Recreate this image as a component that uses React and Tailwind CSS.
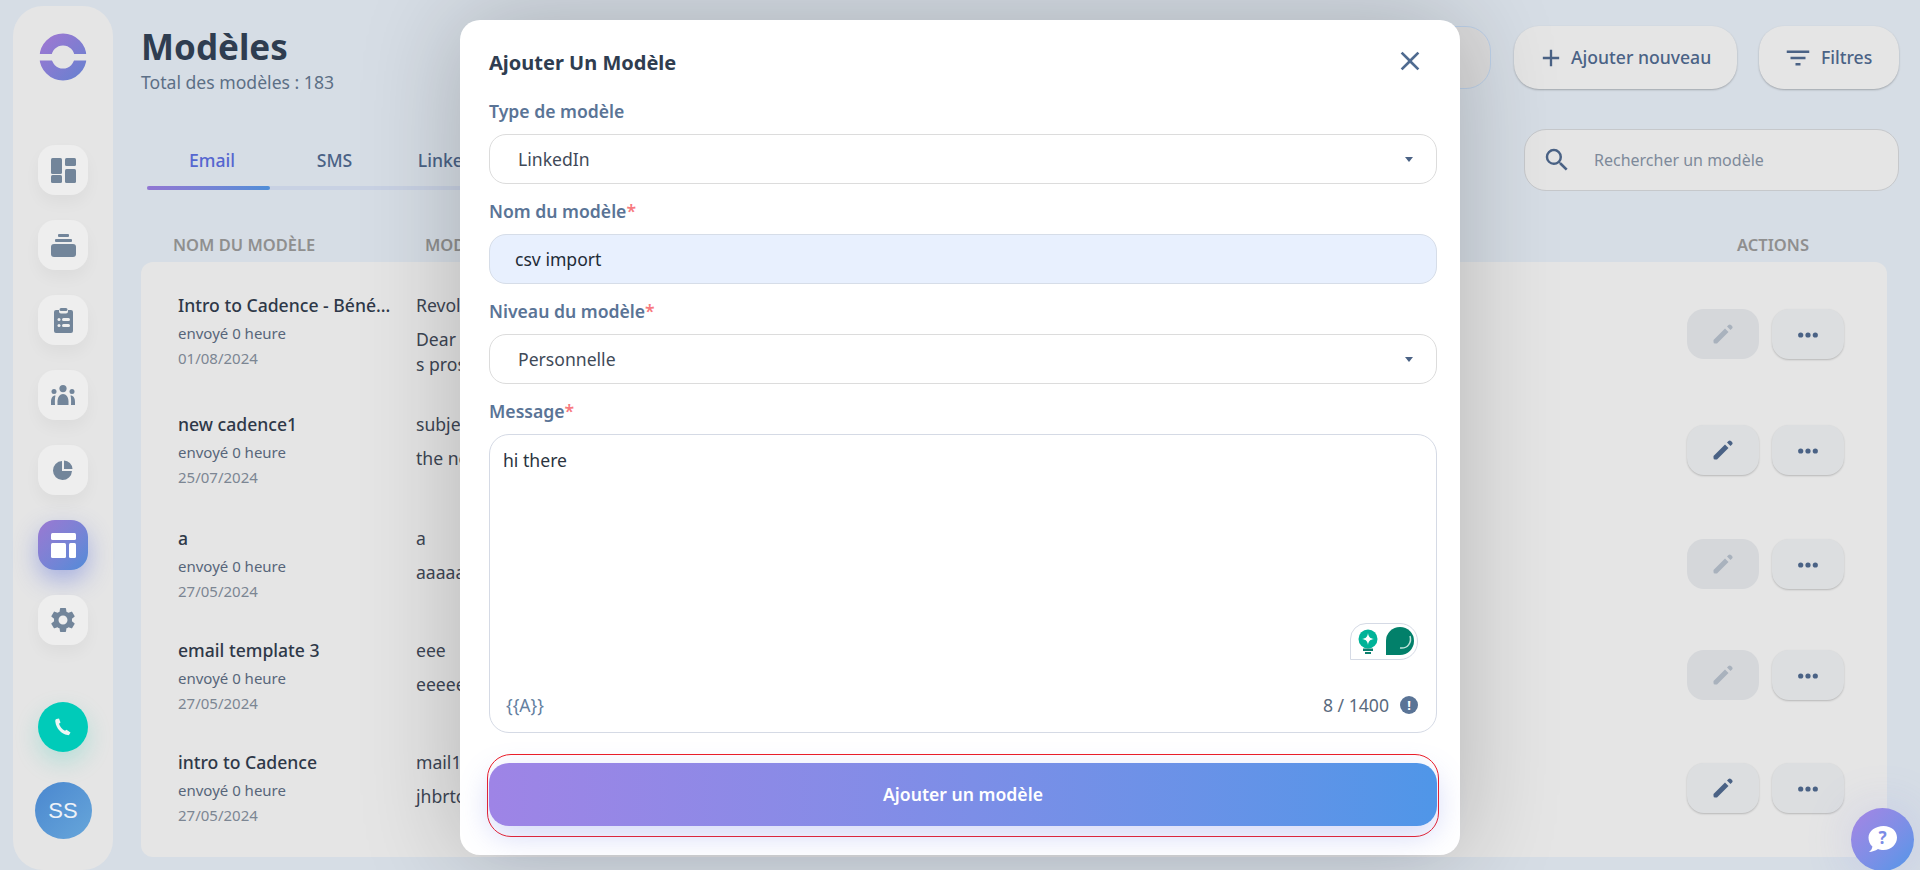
import React from "react";
import { MdSettings, MdSearch, MdAdd, MdFilterList, MdClose } from "react-icons/md";

const Dashboard = () => (
  <svg width="25" height="25" viewBox="0 0 25 25" fill="currentColor">
    <rect x="0" y="0" width="11" height="16" rx="1.500" />
    <rect x="0" y="17" width="11" height="8" rx="1.500" />
    <rect x="14" y="0" width="11" height="8" rx="1.500" />
    <rect x="14" y="11" width="11" height="14" rx="1.500" />
  </svg>
);
const Stack = () => (
  <svg width="25" height="23" viewBox="0 0 25 23" fill="currentColor">
    <rect x="7" y="0" width="11" height="3" rx="1" />
    <rect x="4" y="5" width="17" height="3" rx="1" />
    <path d="M3 10h19a3 3 0 0 1 3 3v7a3 3 0 0 1-3 3H3a3 3 0 0 1-3-3v-7a3 3 0 0 1 3-3z" />
  </svg>
);
const Clip = () => (
  <svg width="19" height="25" viewBox="0 0 19 25">
    <path fill="currentColor" d="M2 2h3v1.500a2 2 0 0 0 2 2h5a2 2 0 0 0 2-2V2h3a2 2 0 0 1 2 2v19a2 2 0 0 1-2 2H2a2 2 0 0 1-2-2V4a2 2 0 0 1 2-2zM7 0h5a1 1 0 0 1 0 3H7a1 1 0 0 1 0-3z" />
    <g fill="#efefef">
      <rect x="3.500" y="10" width="3" height="3" rx="1.500" />
      <rect x="8" y="10" width="8" height="3" rx="1.500" />
      <rect x="3.500" y="16" width="3" height="3" rx="1.500" />
      <rect x="8" y="16" width="8" height="3" rx="1.500" />
    </g>
  </svg>
);
const Team = () => (
  <svg width="24" height="20" viewBox="0 0 24 20" fill="currentColor">
    <circle cx="12" cy="3.600" r="3.600" />
    <circle cx="3" cy="6.500" r="2.500" />
    <circle cx="21" cy="6.500" r="2.500" />
    <path d="M6.500 20v-3.500C6.500 12 9 9 12 9s5.500 3 5.500 7.500V20z" />
    <path d="M0 20v-3C0 13 1.500 10.500 4.500 10.500 3.800 12.500 3.800 17 4 20z" />
    <path d="M24 20v-3c0-4-1.500-6.500-4.500-6.500.7 2 .7 6.500.5 9.500z" />
  </svg>
);
const Pie = () => (
  <svg width="20" height="20" viewBox="0 0 20 20" fill="currentColor">
    <path d="M9 1V11H19A9.500 9.500 0 1 1 9 1Z" />
    <path d="M11 0.500A9 9 0 0 1 19.500 9H11Z" />
  </svg>
);
const LayoutIcon = () => (
  <svg width="25" height="25" viewBox="0 0 25 25" fill="#fff">
    <rect x="0" y="0" width="25" height="7" rx="1.500" />
    <rect x="0" y="10" width="15" height="15" rx="1.500" />
    <rect x="18" y="10" width="7" height="15" rx="1.500" />
  </svg>
);
const Phone = () => (
  <svg width="18" height="18" viewBox="0 0 18 18" fill="#eef7f5">
    <path d="M2.500 1 5 .5l1.500 4-1.500 1.300c.8 2.800 3 5.500 6 7l1.500-1 4 2.700-1 1.800c-.4.700-1 1-2 .8C7.500 15.800 2.200 10.800 1.300 3.500 1.100 2.300 1.500 1.300 2.500 1z" />
  </svg>
);
const Pencil = ({ dim }) => (
  <svg width="20" height="20" viewBox="0 0 20 20" fill={dim ? "#a9b2bd" : "#4a6285"}>
    <path d="M.5 16 12 4.500 15.500 8 4 19.500H2a1.500 1.500 0 0 1-1.500-1.500z" />
    <path d="M14 2.500 15.500 1a1.800 1.800 0 0 1 2.500 0l1 1a1.800 1.800 0 0 1 0 2.500L17.500 6z" />
  </svg>
);
const Dots = () => (
  <svg width="20" height="6" viewBox="0 0 20 6" fill="#4a6285">
    <circle cx="2.700" cy="3" r="2.600" />
    <circle cx="10" cy="3" r="2.600" />
    <circle cx="17.300" cy="3" r="2.600" />
  </svg>
);
const Caret = () => (
  <svg width="8" height="5" viewBox="0 0 8 5" fill="#4a6285">
    <path d="M0 0h8L4 5z" />
  </svg>
);

const SideBtn = ({ children }) => (
  <div className="w-[50px] h-[50px] rounded-[17px] bg-[#eeeeee] text-[#72859a] flex items-center justify-center shadow-[0_8px_16px_rgba(0,0,0,0.04)]">
    {children}
  </div>
);

const rows = [
  { name: "Intro to Cadence - Béné...", date: "01/08/2024", sub: "Revolutionize your outreach", body: ["Dear {{first_name}}, we help", "s prospects"], h: "h-[119px]", a: "mt-[14px]", dim: true },
  { name: "new cadence1", date: "25/07/2024", sub: "subject line", body: ["the new message"], h: "h-[114px]", a: "mt-[11px]", dim: false },
  { name: "a", date: "27/05/2024", sub: "a", body: ["aaaaaaaa"], h: "h-[112px]", a: "mt-[11px]", dim: true },
  { name: "email template 3", date: "27/05/2024", sub: "eee", body: ["eeeeeeee"], h: "h-[112px]", a: "mt-[10px]", dim: true },
  { name: "intro to Cadence", date: "27/05/2024", sub: "mail1", body: ["jhbrtoiuhb"], h: "h-[112px]", a: "mt-[11px]", dim: false },
];

const Field = ({ label, req, children }) => (
  <div>
    <div className="pt-[15px] pb-[11px] leading-6 text-[17.6px] font-semibold text-[#5a7496]">
      {label}
      {req && <span className="text-[#f77a7f]">*</span>}
    </div>
    {children}
  </div>
);

const SelectBox = ({ value }) => (
  <div className="h-[50px] rounded-[17px] border border-[#dcdcdc] bg-white flex items-center justify-between pl-[28px] pr-[23px] text-[17.6px] text-[#3f4a58]">
    <span>{value}</span>
    <Caret />
  </div>
);

export default function App() {
  return (
    <div className="relative h-[870px] overflow-hidden bg-[#d6dde5] flex pt-[6px] font-['Noto_Sans','Open_Sans',sans-serif]">
      <aside className="ml-[13px] w-[100px] h-[864px] shrink-0 rounded-[30px] bg-[#e5e5e5] flex flex-col items-center pt-[27px]">
        <svg width="48" height="48" viewBox="0 0 48 48">
          <defs>
            <linearGradient id="lg" x1="0" y1="0" x2="1" y2="1">
              <stop offset="0" stopColor="#9a78d2" />
              <stop offset="1" stopColor="#6c80d0" />
            </linearGradient>
          </defs>
          <circle cx="24" cy="24" r="17.500" fill="none" stroke="url(#lg)" strokeWidth="12" />
          <rect x="0" y="21" width="48" height="6.500" fill="#e5e5e5" />
        </svg>
        <div className="mt-[64px] flex flex-col gap-[25px]">
          <SideBtn><Dashboard /></SideBtn>
          <SideBtn><Stack /></SideBtn>
          <SideBtn><Clip /></SideBtn>
          <SideBtn><Team /></SideBtn>
          <SideBtn><Pie /></SideBtn>
          <div className="w-[50px] h-[50px] rounded-[17px] bg-gradient-to-br from-[#9a78d2] to-[#4f8bd8] flex items-center justify-center shadow-[0_10px_24px_rgba(90,110,220,0.45)]">
            <LayoutIcon />
          </div>
          <SideBtn><MdSettings size={30} /></SideBtn>
        </div>
        <div className="mt-[57px] w-[50px] h-[50px] rounded-full bg-[#00cbb9] flex items-center justify-center shadow-[0_10px_24px_rgba(0,200,170,0.22)]">
          <Phone />
        </div>
        <div className="mt-[30px] w-[57px] h-[57px] rounded-full bg-gradient-to-br from-[#4a87cf] to-[#67a6da] flex items-center justify-center text-[#eef2f8] text-[22px] font-['Liberation_Sans',sans-serif]">
          SS
        </div>
      </aside>

      <main className="flex-1 ml-[28px] pr-[21px] -mt-[6px]">
        <div className="h-[129px] flex justify-between pt-[27px]">
          <div>
            <h1 className="text-[35px] leading-10 font-bold text-[#2f3d50]">Modèles</h1>
            <p className="text-[17.6px] leading-6 mt-[3px] text-[#5c6f86]">Total des modèles : 183</p>
          </div>
          <div className="flex gap-[22px] h-[63px] -mt-[1px]">
            <div className="w-[180px] mr-[1px] rounded-[25px] border border-[#bcd0e8] bg-[#dcdcdd]" />
            <div className="w-[223px] rounded-[25px] bg-[#e5e5e5] shadow-[0_1px_2px_rgba(0,0,0,0.25)] flex items-center pl-[24px] text-[#4a6285] text-[17.6px] font-medium">
              <MdAdd size={28} className="-ml-[1px]" />
              <span className="ml-[6px]">Ajouter nouveau</span>
            </div>
            <div className="w-[140px] rounded-[25px] bg-[#e5e5e5] shadow-[0_1px_2px_rgba(0,0,0,0.25)] flex items-center pl-[24px] text-[#4a6285] text-[17.6px] font-medium">
              <MdFilterList size={30} />
              <span className="ml-[8px]">Filtres</span>
            </div>
          </div>
        </div>

        <div className="h-[62px] flex justify-between">
          <div className="ml-[6px] w-[900px] h-[61px] border-b-4 border-[#c8d1e3] flex">
            <div className="relative w-[123px] h-[57px] text-center pt-[19px] pl-[7px] leading-6 text-[17.6px] font-medium text-[#5566d0]">
              Email
              <div className="absolute left-0 right-0 -bottom-[4px] h-[4px] rounded-full bg-gradient-to-r from-[#9176d2] to-[#4f8ed8]" />
            </div>
            <div className="w-[123px] text-center pt-[19px] pl-[6px] leading-6 text-[17.6px] font-medium text-[#4a6285]">SMS</div>
            <div className="w-[123px] text-center pt-[19px] leading-6 text-[17.6px] font-medium text-[#4a6285]">LinkedIn</div>
          </div>
          <div className="w-[375px] h-[62px] rounded-[22px] border border-[#c6c8cb] bg-[#e5e5e5] flex items-center pl-[17px] text-[16px] text-[#7e8a9a]">
            <MdSearch size={30} className="text-[#4a6285]" />
            <span className="ml-[22px]">Rechercher un modèle</span>
          </div>
        </div>

        <div className="h-[71px] flex items-end pb-[7px] text-[16.5px] leading-5 font-semibold text-[#8f8f8f]">
          <div className="pl-[32px] w-[284px]">NOM DU MODÈLE</div>
          <div>MODÈLE</div>
          <div className="ml-auto mr-[90px]">ACTIONS</div>
        </div>

        <div className="mr-[12px] h-[595px] rounded-[12px] bg-[#e5e5e5] pt-[33px]">
          {rows.map((r) => (
            <div key={r.name} className={`flex items-start ${r.h}`}>
              <div className="w-[275px] pl-[37px]">
                <div className="text-[17.6px] leading-5 font-medium text-[#2e3848]">{r.name}</div>
                <div className="mt-[8px] text-[15px] leading-5 text-[#57657a]">envoyé 0 heure</div>
                <div className="mt-[5px] text-[15px] leading-5 text-[#7c8693]">{r.date}</div>
              </div>
              <div className="flex-1 text-[17.6px] text-[#3d4654]">
                <div className="leading-5">{r.sub}</div>
                <div className="mt-[12px] leading-[25px]">
                  {r.body.map((b) => (
                    <div key={b}>{b}</div>
                  ))}
                </div>
              </div>
              <div className={`flex gap-[13px] pr-[43px] ${r.a}`}>
                <div className={`w-[72px] h-[50px] rounded-[17px] flex items-center justify-center ${r.dim ? "bg-[#d5d7da]" : "bg-[#dcdee0] shadow-[0_1px_2px_rgba(0,0,0,0.2)]"}`}>
                  <Pencil dim={r.dim} />
                </div>
                <div className="w-[72px] h-[50px] rounded-[17px] bg-[#dcdee0] shadow-[0_1px_2px_rgba(0,0,0,0.2)] flex items-center justify-center pt-[2px]">
                  <Dots />
                </div>
              </div>
            </div>
          ))}
        </div>
      </main>

      <div className="absolute left-[1851px] top-[808px] w-[63px] h-[63px] rounded-full bg-gradient-to-br from-[#a584e4] to-[#4f96e8] flex items-center justify-center shadow-[0_0_50px_rgba(110,120,230,0.2)]">
        <svg width="30" height="27" viewBox="0 0 30 27">
          <path fill="#fff" d="M15.500 0C23.500 0 29 5 29 11.500S23.500 24 15.500 24c-2 0-4-.4-5.500-1-2.500 1.800-6 2.800-9 3 2-1.500 3-3 3.400-5.500C1.800 18.300.5 15 .5 11.500.5 5 7.500 0 15.500 0z" />
          <text x="14.500" y="18" textAnchor="middle" fontSize="17" fontWeight="700" fill="#7b8ce6" fontFamily="Noto Sans, sans-serif">?</text>
        </svg>
      </div>

      {/* dialog */}
      <div className="absolute left-[460px] top-[20px] w-[1000px] h-[835px] rounded-[20px] bg-white pl-[29px] pr-[23px] shadow-[0_0_100px_rgba(0,0,0,0.22)]">
        <div className="h-[64px] pt-[31px] flex justify-between items-start">
          <span className="text-[20px] leading-6 font-bold text-[#2f3d50]">Ajouter Un Modèle</span>
          <MdClose size={32} className="-mt-[6px] mr-[11px] text-[#4f6b90]" />
        </div>
        <div>
          <Field label="Type de modèle"><SelectBox value="LinkedIn" /></Field>
          <Field label="Nom du modèle" req>
            <div className="h-[50px] rounded-[17px] border border-[#d6dde8] bg-[#e8f0fe] flex items-center pl-[25px] text-[17.6px] text-[#222b36]">csv import</div>
          </Field>
          <Field label="Niveau du modèle" req><SelectBox value="Personnelle" /></Field>
          <Field label="Message" req>
            <div className="relative h-[299px] rounded-[20px] border border-[#d5dae5] flex flex-col pl-[13px] pr-[13px] pt-[13px] pb-[15px] text-[17.6px]">
              <div className="leading-6 text-[#2b3440]">hi there</div>
              <div className="mt-auto flex items-center justify-between leading-6">
                <span className="pl-[3px] text-[#64809f]">{"{{A}}"}</span>
                <span className="flex items-center gap-[11px] text-[#5a6a7e]">
                  8 / 1400
                  <span className="mr-[5px] w-[18px] h-[18px] rounded-full bg-[#5a7496] text-white text-[13px] leading-[18px] font-bold text-center">!</span>
                </span>
              </div>
              <div className="absolute right-[18px] bottom-[72px] w-[68px] h-[37px] border border-[#d5dae5] rounded-tl-[16px] rounded-tr-[18px] rounded-br-[18px] bg-white">
                <svg width="66" height="35" viewBox="0 0 66 35" className="block">
                  <circle cx="17" cy="15" r="9.500" fill="#00b398" />
                  <rect x="12" y="24.500" width="10" height="2.500" fill="#0b7f6e" />
                  <rect x="14" y="28" width="6" height="2" fill="#0b7f6e" />
                  <path fill="#fff" d="M17 9c.6 4 2 5.400 6 6-4 .6-5.400 2-6 6-.6-4-2-5.400-6-6 4-.6 5.400-2 6-6z" />
                  <path fill="#02806a" d="M35 17a14 14 0 0 1 28 0 14 14 0 0 1-14 14H35z" />
                  <path fill="none" stroke="#bfe3da" strokeWidth="1.500" d="M59 12c2 6-2 13-10 12" />
                </svg>
              </div>
            </div>
          </Field>
        </div>
        <div className="mt-[21px] -mx-[2px] h-[83px] rounded-[24px] border border-[#ee1c25] pt-[8px] px-[1px]">
          <div className="h-[63px] rounded-[20px] bg-gradient-to-r from-[#9e84e6] to-[#4f96e8] flex items-center justify-center text-white text-[17.6px] font-semibold shadow-[0_10px_30px_rgba(100,120,230,0.28)]">
            Ajouter un modèle
          </div>
        </div>
      </div>
    </div>
  );
}
